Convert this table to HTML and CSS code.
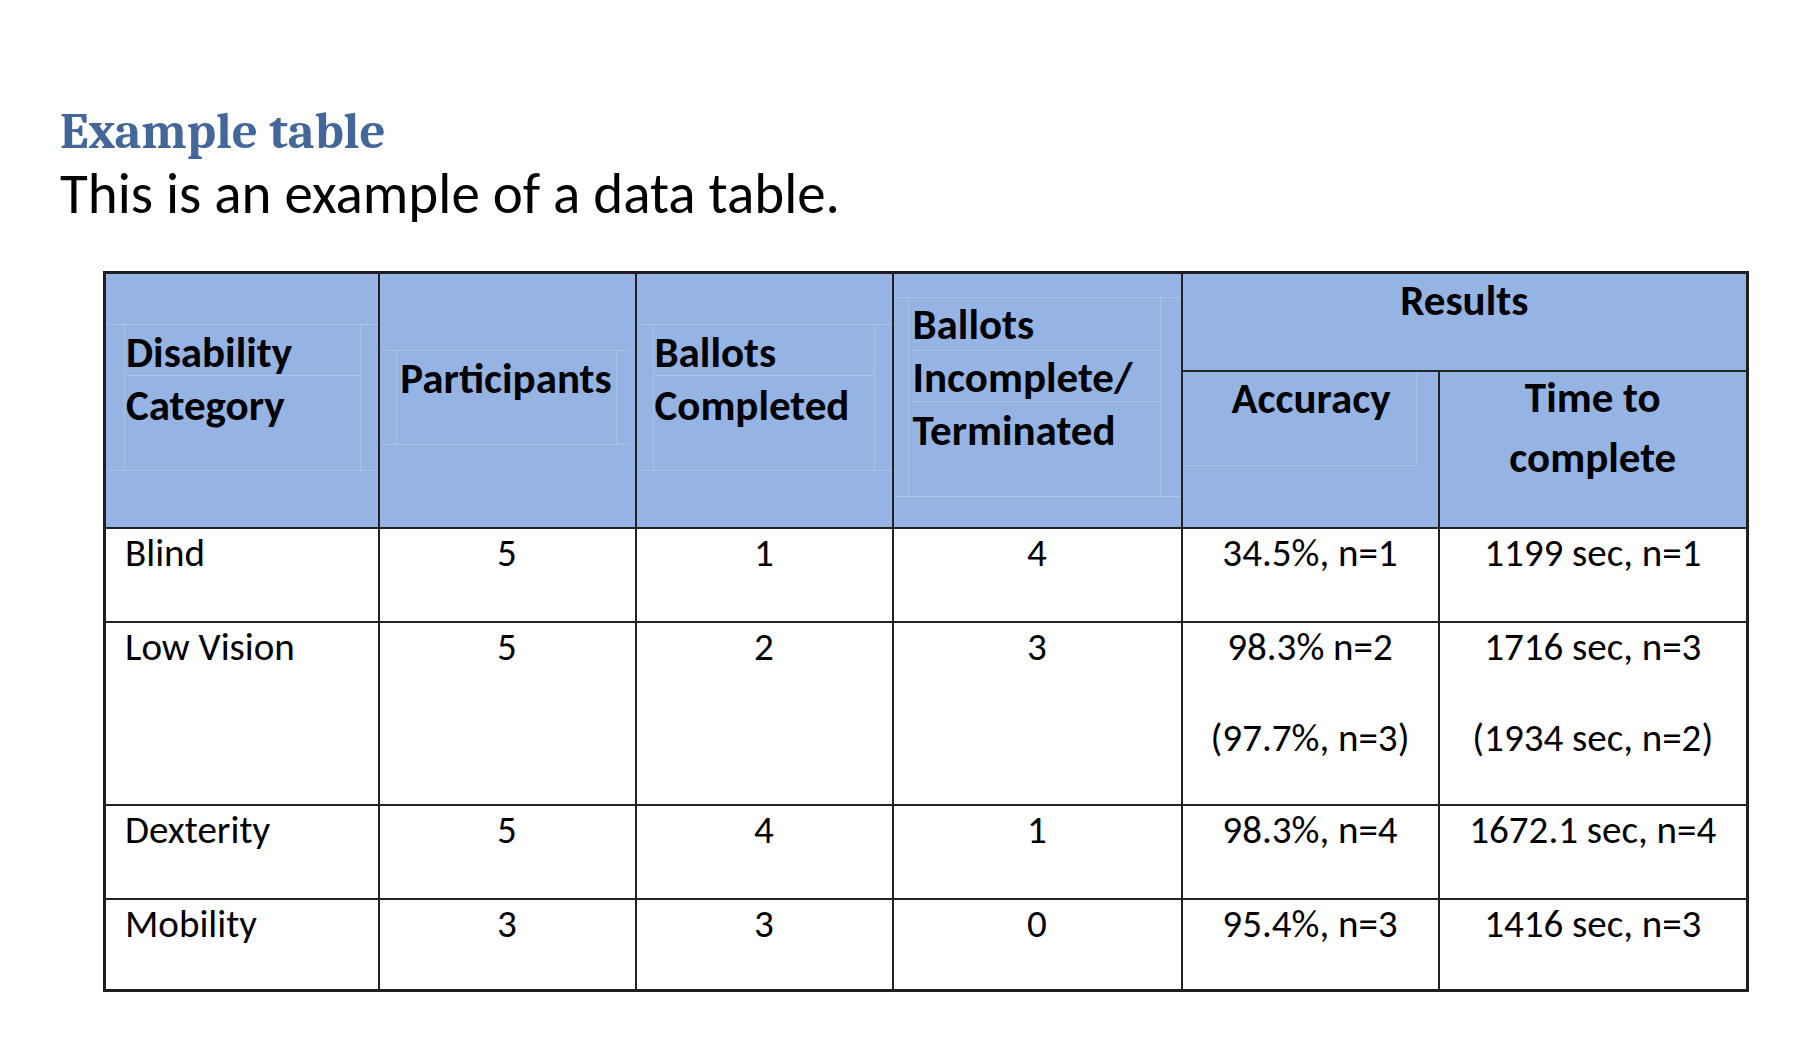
FILE: index.html
```html
<!DOCTYPE html>
<html lang="en">
<head>
<meta charset="utf-8">
<title>Example table</title>
<link rel="stylesheet" href="styles.css">
</head>
<body>
<main class="page">
  <header class="intro">
    <h1 class="title">Example table</h1>
    <p class="lead">This is an example of a data table.</p>
  </header>
  <table class="data">
    <colgroup>
      <col class="c1"><col class="c2"><col class="c3"><col class="c4"><col class="c5"><col class="c6">
    </colgroup>
    <thead>
      <tr class="hr1">
        <th rowspan="2" class="k1">
          <div class="fr"><div class="fi"><div class="fl">Disability</div><div class="fl">Category</div></div></div>
        </th>
        <th rowspan="2" class="k2">
          <div class="fr"><div class="fi"><div class="fl">Participants</div></div></div>
        </th>
        <th rowspan="2" class="k3">
          <div class="fr"><div class="fi"><div class="fl">Ballots</div><div class="fl">Completed</div></div></div>
        </th>
        <th rowspan="2" class="k4">
          <div class="fr"><div class="fi"><div class="fl">Ballots</div><div class="fl">Incomplete/</div><div class="fl">Terminated</div></div></div>
        </th>
        <th colspan="2" class="kr">Results</th>
      </tr>
      <tr class="hr2">
        <th class="k5"><div class="acc">Accuracy</div></th>
        <th class="k6"><div class="ttc">Time to<br>complete</div></th>
      </tr>
    </thead>
    <tbody>
      <tr class="r-short">
        <td class="t-left">Blind</td>
        <td>5</td><td>1</td><td>4</td>
        <td>34.5%, n=1</td>
        <td>1199 sec, n=1</td>
      </tr>
      <tr class="r-tall">
        <td class="t-left">Low Vision</td>
        <td>5</td><td>2</td><td>3</td>
        <td><p class="ln">98.3% n=2</p><p class="ln ln-2">(97.7%, n=3)</p></td>
        <td><p class="ln">1716 sec, n=3</p><p class="ln ln-2">(1934 sec, n=2)</p></td>
      </tr>
      <tr class="r-short">
        <td class="t-left">Dexterity</td>
        <td>5</td><td>4</td><td>1</td>
        <td>98.3%, n=4</td>
        <td>1672.1 sec, n=4</td>
      </tr>
      <tr class="r-last">
        <td class="t-left">Mobility</td>
        <td>3</td><td>3</td><td>0</td>
        <td>95.4%, n=3</td>
        <td>1416 sec, n=3</td>
      </tr>
    </tbody>
  </table>
</main>
</body>
</html>
```
FILE: styles.css
```css
html, body {
  margin: 0;
  padding: 0;
  background: #ffffff;
}

.page {
  width: 1802px;
  height: 1050px;
  box-sizing: border-box;
  padding: 0 0 0 60px;
  font-family: Carlito, Lato, "Open Sans", sans-serif;
  color: #000;
}

.intro {
  padding-top: 101px;
}

.title {
  margin: 0;
  font-family: Caladea, "DejaVu Serif Condensed", "DejaVu Serif", serif;
  font-weight: bold;
  font-size: 51px;
  line-height: 62px;
  height: 62px;
  color: #44679b;
}

.lead {
  margin: 0;
  font-size: 57px;
  line-height: 62px;
  height: 62px;
  white-space: nowrap;
}

/* ---------- table ---------- */
.data {
  margin: 46px 0 0 43px;
  border-collapse: collapse;
  table-layout: fixed;
  width: 1643px;
  border: 3px solid #1f1f1f;
}

.c1 { width: 274px; }
.c2 { width: 257px; }
.c3 { width: 257px; }
.c4 { width: 289px; }
.c5 { width: 257px; }
.c6 { width: 309px; }

.data th,
.data td {
  border: 2px solid #222;
}

.data th {
  background: #95b3e3;
  font-weight: bold;
  font-size: 43px;
  line-height: 53px;
  vertical-align: top;
  text-align: left;
  padding: 0;
}

.hr1 { height: 98px; }
.hr2 { height: 157px; }

/* faint nested-box lines inside the header cells */
.fr {
  border-top: 1px solid #a9c3ee;
  border-bottom: 1px solid #a9c3ee;
}

.fi {
  height: 100%;
  border-left: 1px solid #a9c3ee;
  border-right: 1px solid #a9c3ee;
}

.fl + .fl {
  border-top: 1px solid #a9c3ee;
}

.k1 .fr,
.k3 .fr {
  margin-top: 50px;
  height: 145px;
}

.k1 .fi {
  margin-left: 18px;
  width: 234px;
  padding-left: 1px;
}

.k3 .fi {
  margin-left: 16px;
  width: 219px;
  padding-left: 1px;
}

.k1 .fl:first-child,
.k3 .fl:first-child {
  height: 49px;
  padding-top: 1px;
}

.k1 .fl + .fl,
.k3 .fl + .fl {
  padding-top: 3px;
}

.k2 .fr {
  margin: 76px 5px 0 2px;
  height: 93px;
}

.k2 .fi {
  margin-left: 14px;
  width: 219px;
  text-align: center;
}

.k2 .fl {
  padding-top: 1px;
}

.k4 .fr {
  margin-top: 23px;
  height: 198px;
}

.k4 .fi {
  margin-left: 14px;
  width: 247px;
  padding-left: 4px;
}

.k4 .fl:nth-child(1) { height: 52px; }
.k4 .fl:nth-child(2) { height: 50px; }
.k4 .fl:nth-child(3) { height: 92px; padding-top: 2px; }

.data th.kr {
  text-align: center;
}

.acc {
  width: 209px;
  height: 93px;
  padding-left: 24px;
  text-align: center;
  border-right: 1px solid #a9c3ee;
  border-bottom: 1px solid #a9c3ee;
}

.ttc {
  margin-top: -4px;
  line-height: 60px;
  text-align: center;
}

/* ---------- body ---------- */
.data td {
  font-size: 39px;
  line-height: 44px;
  vertical-align: top;
  text-align: center;
  padding: 2px 6px 0;
}

.data td.t-left {
  text-align: left;
  padding-left: 19px;
}

.r-short { height: 94px; }
.r-tall { height: 183px; }
.r-last { height: 92px; }

.ln { margin: 0; }
.ln-2 { margin-top: 47px; }
```
